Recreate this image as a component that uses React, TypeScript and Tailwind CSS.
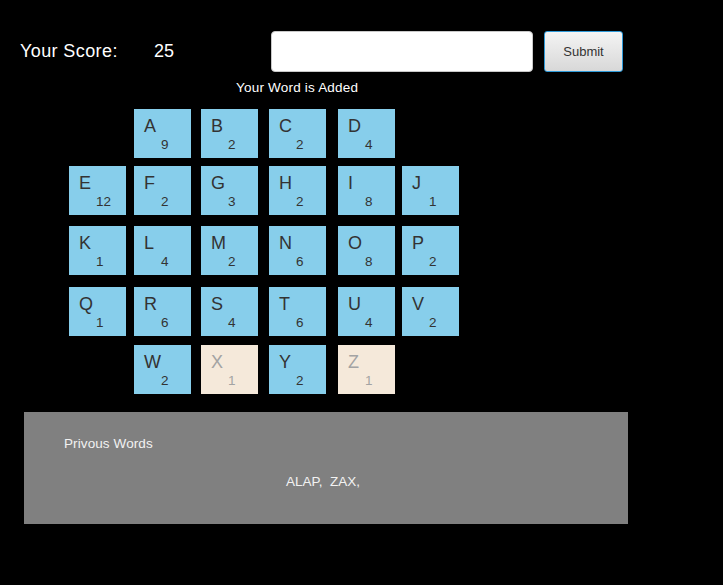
import React from "react";

type Tile = { l: string; n: number; col: number; row: number; used?: boolean };

const rows: { l: string; n: number; used?: boolean }[][] = [
  [
    { l: "A", n: 9 },
    { l: "B", n: 2 },
    { l: "C", n: 2 },
    { l: "D", n: 4 },
  ],
  [
    { l: "E", n: 12 },
    { l: "F", n: 2 },
    { l: "G", n: 3 },
    { l: "H", n: 2 },
    { l: "I", n: 8 },
    { l: "J", n: 1 },
  ],
  [
    { l: "K", n: 1 },
    { l: "L", n: 4 },
    { l: "M", n: 2 },
    { l: "N", n: 6 },
    { l: "O", n: 8 },
    { l: "P", n: 2 },
  ],
  [
    { l: "Q", n: 1 },
    { l: "R", n: 6 },
    { l: "S", n: 4 },
    { l: "T", n: 6 },
    { l: "U", n: 4 },
    { l: "V", n: 2 },
  ],
  [
    { l: "W", n: 2 },
    { l: "X", n: 1, used: true },
    { l: "Y", n: 2 },
    { l: "Z", n: 1, used: true },
  ],
];

const colStart = ["col-start-1", "col-start-2", "col-start-3", "col-start-4", "col-start-5", "col-start-6"];
const rowStart = ["row-start-1", "row-start-2", "row-start-3", "row-start-4", "row-start-5"];

const tiles: Tile[] = rows.flatMap((r, ri) =>
  r.map((t, ci) => ({ ...t, row: ri, col: r.length === 4 ? ci + 1 : ci }))
);

export default function App() {
  return (
    <div
      className="min-h-screen bg-black text-white"
      style={{ fontFamily: '"Liberation Sans", Arial, Helvetica, sans-serif' }}
    >
      <div className="pt-[31px]">
        <div className="flex h-[41px] items-center pl-[20px]">
          <span className="w-[134px] text-[18px] leading-[21px] tracking-[0.4px]">Your Score:</span>
          <span className="w-[117px] text-[18px] leading-[21px]">25</span>
          <input
            type="text"
            className="h-[41px] w-[262px] rounded-[4px] border border-[#c8c8c8] bg-white px-2 text-black outline-none"
          />
          <button className="ml-[11px] h-[41px] w-[79px] rounded-[3px] border border-[#2f9ad8] bg-gradient-to-b from-[#f4f4f4] to-[#d8d8d8] text-[13px] text-[#333]">
            Submit
          </button>
        </div>
        <div className="mt-[8px] h-[16px] pl-[236px] text-[13.5px] leading-[16px] tracking-[0.2px]">
          Your Word is Added
        </div>
      </div>

      <div className="ml-[69px] mt-[13px] grid grid-cols-[65px_67px_68px_69px_64px_57px] grid-rows-[57px_60px_61px_58px_49px]">
        {tiles.map((t) => (
          <div
            key={t.l}
            className={`${colStart[t.col]} ${rowStart[t.row]} h-[49px] w-[57px] pl-[10px] pt-[7px] ${
              t.used ? "bg-[#f5e9da] text-[#a3a3a3]" : "bg-[#87ceeb] text-[#333333]"
            }`}
          >
            <div className="text-[18px] leading-[21px]">{t.l}</div>
            <div className="pl-[17px] text-[13.5px] leading-[15px]">{t.n}</div>
          </div>
        ))}
      </div>

      <div className="ml-[24px] mt-[18px] h-[112px] w-[604px] bg-[#808080] text-[#f2f2f2]">
        <div className="pl-[40px] pt-[24px] text-[13.5px] leading-[16px] tracking-[0.1px]">Privous Words</div>
        <div className="mt-[22px] pr-[6px] text-center text-[13.5px] leading-[16px]">ALAP,&nbsp; ZAX,</div>
      </div>
    </div>
  );
}
